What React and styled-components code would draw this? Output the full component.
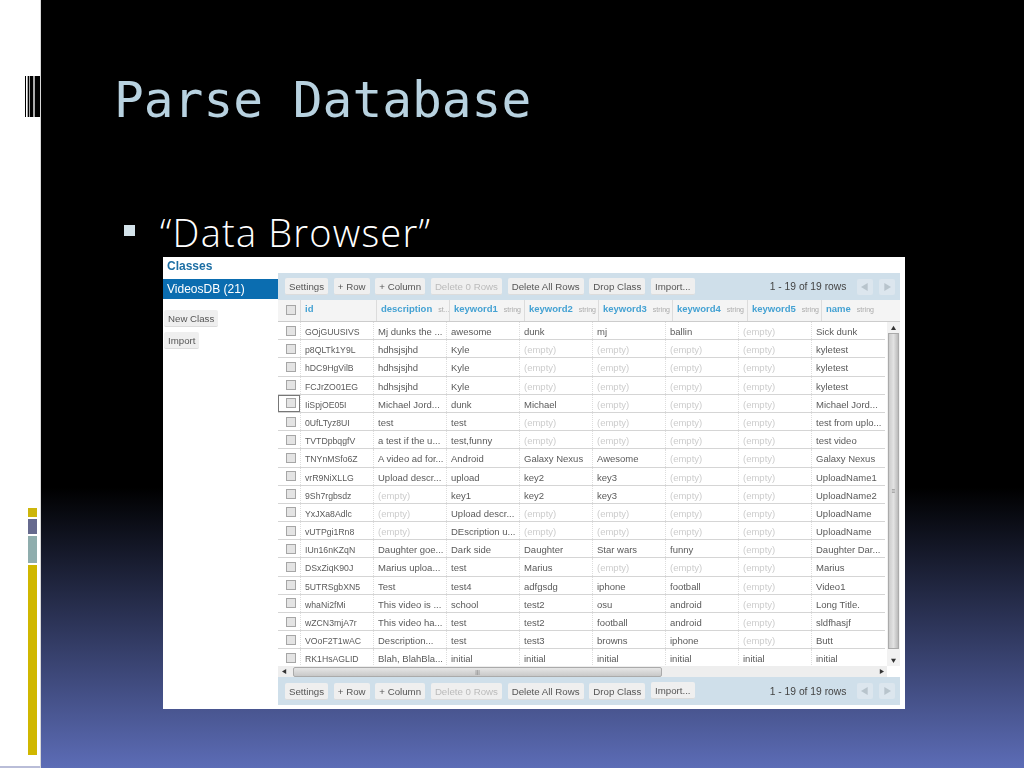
import React from 'react'
import styled, { createGlobalStyle } from 'styled-components'

const GlobalStyle = createGlobalStyle`
  html, body { margin: 0; padding: 0; background: #000; overflow: hidden; }
  * { box-sizing: border-box; }
`

const Slide = styled.div`
  display: flex;
  width: 1024px;
  height: 768px;
  overflow: hidden;
`
const Strip = styled.div`
  position: relative;
  width: 41px;
  flex: none;
  background: #fff;
  border-right: 1px solid #d8d8d8;
  display: flex;
  flex-direction: column;
  align-items: flex-end;
  padding: 76px 0 0 0;
`
const Bars = styled.div`
  flex: none;
  width: 15px;
  height: 41px;
`
const Blocks = styled.div`
  display: flex;
  flex-direction: column;
  gap: 2px;
  width: 9px;
  margin: 391px 3px 0 0;
`
const Block = styled.div`
  height: ${p => p.$h}px;
  background: ${p => p.$c};
`
const StripFoot = styled.div`
  position: absolute;
  left: 0;
  right: 0;
  bottom: 0;
  height: 2px;
  background: #b9bdd8;
`
const Main = styled.div`
  flex: 1;
  padding: 65px 0 0 73px;
  background: linear-gradient(#000 0, #000 63.5%, #5c6cb6 100%);
`
const Title = styled.h1`
  margin: 0;
  height: 70px;
  font: 400 49.5px/70px "DejaVu Sans Mono", monospace;
  color: #b8d2e0;
`
const Bullet = styled.div`
  display: flex;
  align-items: center;
  height: 60px;
  margin-top: 67px;
  font: 300 38px/60px "Open Sans", sans-serif;
  letter-spacing: 1.2px;
  color: #fff;
`
const BulletMark = styled.span`
  width: 11px;
  height: 11px;
  margin: 0 25px 4px 10px;
  background: #d3e2ea;
`
const Shot = styled.div`
  display: flex;
  width: 742px;
  height: 452px;
  margin: -5px 0 0 49px;
  background: #fff;
  font-family: "Liberation Sans", Arial, sans-serif;
  color: #555;
  filter: blur(0.45px);
`
const Classes = styled.div`
  width: 115px;
  flex: none;
  padding-top: 2px;
`
const ClassesTitle = styled.div`
  height: 20px;
  padding-left: 4px;
  font-size: 12px;
  font-weight: 700;
  line-height: 14px;
  color: #1c6ea4;
`
const ClassItem = styled.div`
  height: 20px;
  padding-left: 4px;
  font-size: 12px;
  line-height: 20px;
  color: #fff;
  background: #0b6db0;
`
const SideActions = styled.div`
  display: flex;
  flex-direction: column;
  align-items: flex-start;
  gap: 5px;
  margin: 11px 0 0 1px;
`
const Btn = styled.div`
  flex: none;
  height: 17px;
  padding: 0 4px;
  border-radius: 2px;
  background: #efefef;
  border-bottom: 1px solid #dcdcdc;
  font-size: 9.7px;
  line-height: 17px;
  white-space: nowrap;
  color: ${p => (p.$off ? '#bbb' : '#555')};
  margin-top: ${p => (p.$up ? '-1px' : '0')};
`
const Browser = styled.div`
  flex: 1;
  min-width: 0;
  padding: 16px 5px 4px 0;
  display: flex;
  flex-direction: column;
`
const Toolbar = styled.div`
  flex: none;
  height: ${p => p.$h}px;
  display: flex;
  align-items: center;
  gap: 5.8px;
  padding: 0 5px 0 7px;
  background: #cfdfea;
`
const PageInfo = styled.div`
  margin-left: auto;
  margin-right: 5px;
  font-size: 10.3px;
  color: #444;
`
const PagerBtn = styled.div`
  width: 16px;
  height: 16px;
  display: flex;
  align-items: center;
  justify-content: center;
  background: #dce6ee;
  border-radius: 2px;
`
const HeaderRow = styled.div`
  flex: none;
  height: 22px;
  display: grid;
  grid-template-columns: 22px 76px 73px 75px 74px 74px 75px 74px 74px;
  background: #f4f4f4;
  border-bottom: 1px solid #ccc;
`
const HeaderCell = styled.div`
  display: flex;
  align-items: baseline;
  gap: 6px;
  padding: 3px 0 0 4px;
  border-left: 1px solid #dcdcdc;
  overflow: hidden;
  white-space: nowrap;
`
const HeaderCheck = styled.div`
  display: flex;
  align-items: center;
  padding: 0 0 2px 8px;
`
const ColName = styled.span`
  font-size: 9.5px;
  font-weight: 700;
  color: #45a2d3;
`
const ColType = styled.span`
  font-size: 7px;
  color: #aaa;
`
const TableArea = styled.div`
  position: relative;
  flex: 1;
  min-height: 0;
  overflow: hidden;
`
const Row = styled.div`
  display: grid;
  grid-template-columns: 22px repeat(8, 73px);
  width: 607px;
  height: 18.2px;
  border-bottom: 1px solid #d5d5d5;
`
const CheckCell = styled.div`
  display: flex;
  align-items: center;
  padding-left: 8px;
  outline: ${p => (p.$active ? '1px solid #777' : 'none')};
  outline-offset: -1px;
`
const Check = styled.span`
  width: 10px;
  height: 10px;
  background: #e4e4e4;
  border: 1px solid #a6a6a6;
`
const Cell = styled.div`
  padding: 1px 0 0 4px;
  border-left: 1px dotted #ddd;
  font-size: ${p => (p.$id ? '8.7px' : '9.5px')};
  line-height: 18px;
  white-space: nowrap;
  overflow: hidden;
  color: ${p => (p.$empty ? '#ccc' : '#5a5a5a')};
`
const VScroll = styled.div`
  position: absolute;
  top: 0;
  right: 0;
  bottom: 11px;
  width: 13px;
  display: flex;
  flex-direction: column;
  align-items: center;
  background: #f2f2f2;
`
const VThumb = styled.div`
  flex: 1;
  width: 11px;
  margin: 3px 0 9px;
  display: flex;
  align-items: center;
  justify-content: center;
  background: linear-gradient(90deg, #ccc, #e2e2e2 50%, #bbb);
  border: 1px solid #aaa;
`
const HScroll = styled.div`
  position: absolute;
  left: 0;
  right: 13px;
  bottom: 0;
  height: 11px;
  background: #eee;
  display: flex;
  align-items: center;
`
const HThumb = styled.div`
  width: 369px;
  height: 10px;
  margin-left: 15px;
  display: flex;
  align-items: center;
  justify-content: center;
  background: linear-gradient(#e6e6e6, #c8c8c8);
  border: 1px solid #aaa;
  border-radius: 2px;
`
const Grip = styled.span`
  font-size: 6px;
  line-height: 6px;
  color: #777;
`
const Arrow = styled.svg`
  flex: none;
  width: ${p => p.$s || 6}px;
  height: ${p => p.$s || 6}px;
  margin: ${p => p.$m || 0};
  fill: ${p => p.$c || '#333'};
`
const HArrowStart = styled.span`
  position: absolute;
  left: 4px;
  bottom: 3px;
  display: flex;
`

const Tri = ({ dir, ...rest }) => {
  const pts = { up: '0,6 3,1 6,6', down: '0,1 6,1 3,6', left: '5,0 5,6 0,3', right: '1,0 1,6 6,3' }
  return (
    <Arrow viewBox="0 0 6 6" {...rest}>
      <polygon points={pts[dir]} />
    </Arrow>
  )
}

const E = '(empty)'
const rows = [
  ['GOjGUUSIVS', 'Mj dunks the ...', 'awesome', 'dunk', 'mj', 'ballin', E, 'Sick dunk'],
  ['p8QLTk1Y9L', 'hdhsjsjhd', 'Kyle', E, E, E, E, 'kyletest'],
  ['hDC9HgVilB', 'hdhsjsjhd', 'Kyle', E, E, E, E, 'kyletest'],
  ['FCJrZO01EG', 'hdhsjsjhd', 'Kyle', E, E, E, E, 'kyletest'],
  ['IiSpjOE05I', 'Michael Jord...', 'dunk', 'Michael', E, E, E, 'Michael Jord...'],
  ['0UfLTyz8UI', 'test', 'test', E, E, E, E, 'test from uplo...'],
  ['TVTDpbqgfV', 'a test if the u...', 'test,funny', E, E, E, E, 'test video'],
  ['TNYnMSfo6Z', 'A video ad for...', 'Android', 'Galaxy Nexus', 'Awesome', E, E, 'Galaxy Nexus'],
  ['vrR9NiXLLG', 'Upload descr...', 'upload', 'key2', 'key3', E, E, 'UploadName1'],
  ['9Sh7rgbsdz', E, 'key1', 'key2', 'key3', E, E, 'UploadName2'],
  ['YxJXa8Adlc', E, 'Upload descr...', E, E, E, E, 'UploadName'],
  ['vUTPgi1Rn8', E, 'DEscription u...', E, E, E, E, 'UploadName'],
  ['IUn16nKZqN', 'Daughter goe...', 'Dark side', 'Daughter', 'Star wars', 'funny', E, 'Daughter Dar...'],
  ['DSxZiqK90J', 'Marius uploa...', 'test', 'Marius', E, E, E, 'Marius'],
  ['5UTRSgbXN5', 'Test', 'test4', 'adfgsdg', 'iphone', 'football', E, 'Video1'],
  ['whaNi2fMi', 'This video is ...', 'school', 'test2', 'osu', 'android', E, 'Long Title.'],
  ['wZCN3mjA7r', 'This video ha...', 'test', 'test2', 'football', 'android', E, 'sldfhasjf'],
  ['VOoF2T1wAC', 'Description...', 'test', 'test3', 'browns', 'iphone', E, 'Butt'],
  ['RK1HsAGLID', 'Blah, BlahBla...', 'initial', 'initial', 'initial', 'initial', 'initial', 'initial'],
]

const columns = [
  ['id', ''],
  ['description', 'st...'],
  ['keyword1', 'string'],
  ['keyword2', 'string'],
  ['keyword3', 'string'],
  ['keyword4', 'string'],
  ['keyword5', 'string'],
  ['name', 'string'],
]

const Tools = ({ h }) => (
  <Toolbar $h={h}>
    <Btn>Settings</Btn>
    <Btn>+ Row</Btn>
    <Btn>+ Column</Btn>
    <Btn $off>Delete 0 Rows</Btn>
    <Btn>Delete All Rows</Btn>
    <Btn>Drop Class</Btn>
    <Btn $up>Import...</Btn>
    <PageInfo>1 - 19 of 19 rows</PageInfo>
    <PagerBtn><Tri dir="left" $s={8} $c="#b8c4cc" /></PagerBtn>
    <PagerBtn><Tri dir="right" $s={8} $c="#b8c4cc" /></PagerBtn>
  </Toolbar>
)

export default function App() {
  return (
    <Slide>
      <GlobalStyle />
      <Strip>
        <Bars>
          <svg width="15" height="41" viewBox="0 0 15 41">
            <rect width="15" height="41" fill="#aaa" />
            <rect x="1" width="1" height="41" fill="#fff" />
            <rect x="0" width="1" height="41" fill="#000" />
            <rect x="3" width="1" height="41" fill="#000" />
            <rect x="5" width="3" height="41" fill="#000" />
            <rect x="10" width="5" height="41" fill="#000" />
          </svg>
        </Bars>
        <Blocks>
          <Block $h={9} $c="#cdb60c" />
          <Block $h={15} $c="#666a8e" />
          <Block $h={27} $c="#8fadad" />
          <Block $h={190} $c="#d0b700" />
        </Blocks>
        <StripFoot />
      </Strip>
      <Main>
        <Title>Parse Database</Title>
        <Bullet>
          <BulletMark />
          “Data Browser”
        </Bullet>
        <Shot>
          <Classes>
            <ClassesTitle>Classes</ClassesTitle>
            <ClassItem>VideosDB (21)</ClassItem>
            <SideActions>
              <Btn>New Class</Btn>
              <Btn>Import</Btn>
            </SideActions>
          </Classes>
          <Browser>
            <Tools h={27} />
            <HeaderRow>
              <HeaderCheck><Check /></HeaderCheck>
              {columns.map(([name, type]) => (
                <HeaderCell key={name}>
                  <ColName>{name}</ColName>
                  <ColType>{type}</ColType>
                </HeaderCell>
              ))}
            </HeaderRow>
            <TableArea>
              {rows.map((r, i) => (
                <Row key={r[0]}>
                  <CheckCell $active={i === 4}><Check /></CheckCell>
                  {r.map((c, j) => (
                    <Cell key={j} $id={j === 0} $empty={c === E}>{c}</Cell>
                  ))}
                </Row>
              ))}
              <VScroll>
                <Tri dir="up" $s={5} $m="3px 0 0" />
                <VThumb><Grip>≡</Grip></VThumb>
                <Tri dir="down" $s={5} $m="0 0 3px" />
              </VScroll>
              <HScroll>
                <HThumb><Grip>|||</Grip></HThumb>
                <Tri dir="right" $s={5} $m="0 0 0 217px" />
              </HScroll>
              <HArrowStart><Tri dir="left" $s={5} /></HArrowStart>
            </TableArea>
            <Tools h={28} />
          </Browser>
        </Shot>
      </Main>
    </Slide>
  )
}
